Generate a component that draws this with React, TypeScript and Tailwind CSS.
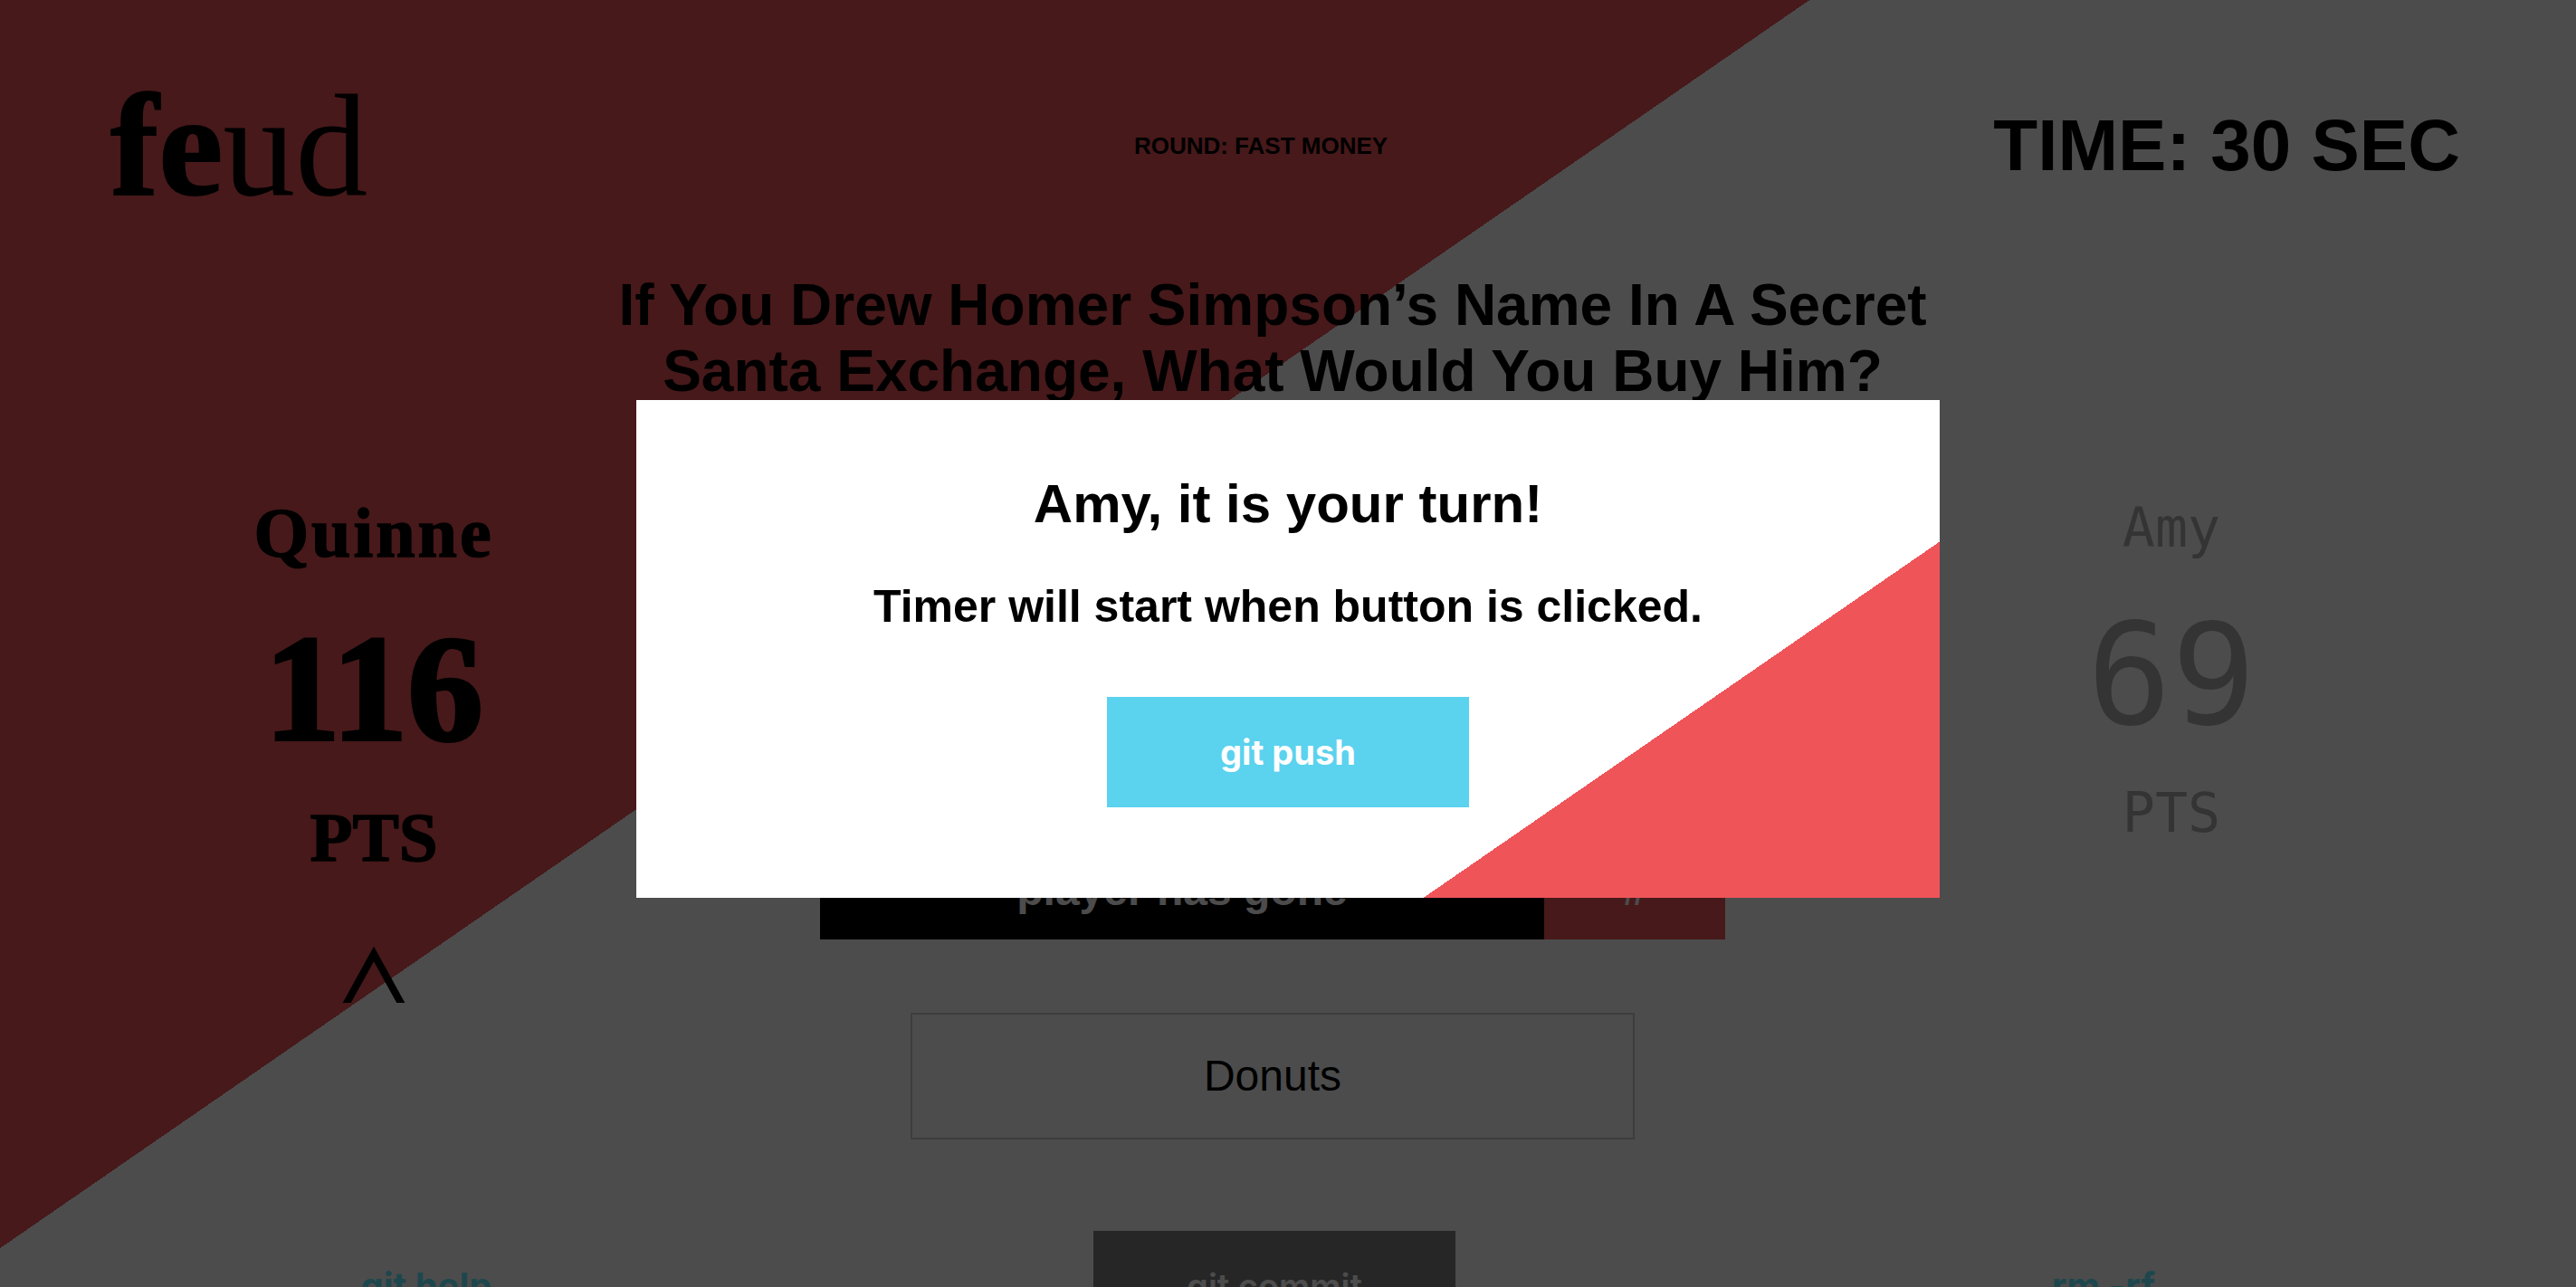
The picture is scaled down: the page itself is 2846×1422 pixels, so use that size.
function Caret() {
  return (
    <svg width="72" height="62" viewBox="0 0 72 62" fill="none" stroke="currentColor" strokeWidth={8}>
      <polyline points="4,66 36,8 68,66" strokeLinejoin="miter" />
    </svg>
  );
}

export default function App() {
  return (
    <div className="relative h-screen w-full overflow-hidden bg-[linear-gradient(145.4deg,#ef5459_40.74%,#ffffff_40.74%)] font-['Liberation_Sans',Arial,sans-serif] text-black">
      <div className="w-[2812px]">
        {/* header */}
        <header className="mt-[71px] grid h-[180px] w-[2786px] grid-cols-[1fr_auto_1fr] items-center">
          <div className="pl-[122px] font-['Liberation_Serif',serif] text-[160px] leading-none">
            <span className="font-bold [-webkit-text-stroke:2px_#000]">fe</span>
            <span>ud</span>
          </div>
          <div className="text-[26px] font-bold leading-none">ROUND: FAST MONEY</div>
          <div className="justify-self-end pr-[68px] text-[80px] font-bold leading-none">TIME: 30 SEC</div>
        </header>

        <h1 className="mx-auto mt-[50px] max-w-[1500px] text-center text-[64px] font-bold leading-[73px]">
          If You Drew Homer Simpson’s Name In A Secret Santa Exchange, What Would You Buy Him?
        </h1>

        <div className="mt-[101px] grid grid-cols-[826px_1fr_826px]">
          {/* player one */}
          <div className="flex flex-col items-center font-['Liberation_Serif',serif] font-bold">
            <div className="mt-[2px] text-[78px] leading-none tracking-[3px] [-webkit-text-stroke:1.5px_#000]">Quinne</div>
            <div className="mt-[49px] text-[167px] leading-none [-webkit-text-stroke:4px_#000]">116</div>
            <div className="mt-[43px] text-[77px] leading-none [-webkit-text-stroke:1.5px_#000]">PTS</div>
            <div className="mt-[82px]">
              <Caret />
            </div>
          </div>

          {/* board */}
          <div className="flex flex-col items-center">
            <div className="mt-[382px] flex h-[108px] w-[1000px]">
              <div className="flex w-[800px] items-center justify-center bg-black text-[48px] font-bold text-white">
                player has gone
              </div>
              <div className="flex flex-1 items-center justify-center bg-[#ef5459] text-[48px] font-bold text-white">#</div>
            </div>
            <div className="mt-[81px] flex h-[140px] w-[800px] items-center justify-center border-2 border-[#cccccc] text-[48px]">
              Donuts
            </div>
          </div>

          {/* player two */}
          <div className="flex flex-col items-center font-['DejaVu_Sans_Mono',monospace] text-[#b0b0b0]">
            <div className="mt-[5px] text-[60px] leading-none">Amy</div>
            <div className="mt-[56px] text-[155px] leading-none">69</div>
            <div className="mt-[44px] text-[60px] leading-none">PTS</div>
          </div>
        </div>

        <div className="mt-[101px] flex items-center font-['Inter',sans-serif]">
          <div className="flex w-[942px] justify-center text-[40px] font-bold text-[#62eeff]">git help</div>
          <div className="flex w-[932px] justify-center">
            <button className="h-[122px] w-[400px] bg-[#808080] text-[38px] font-semibold text-white">git commit</button>
          </div>
          <div className="flex w-[900px] justify-center text-[40px] font-bold text-[#62eeff]">rm -rf</div>
        </div>
      </div>

      {/* turn modal */}
      <div className="fixed inset-0 flex items-start justify-center bg-black/70 pt-[442px]">
        <div className="flex h-[550px] w-[1440px] flex-col items-center bg-[linear-gradient(145.4deg,#ffffff_74.5%,#ef5459_74.5%)] pt-[85px]">
          <h2 className="text-[60px] font-bold leading-none">Amy, it is your turn!</h2>
          <p className="mt-[58px] text-[50px] font-bold leading-none">Timer will start when button is clicked.</p>
          <button className="mt-[75px] h-[122px] w-[400px] bg-[#5bd2ee] font-['Inter',sans-serif] text-[38px] font-bold text-white">
            git push
          </button>
        </div>
      </div>
    </div>
  );
}
